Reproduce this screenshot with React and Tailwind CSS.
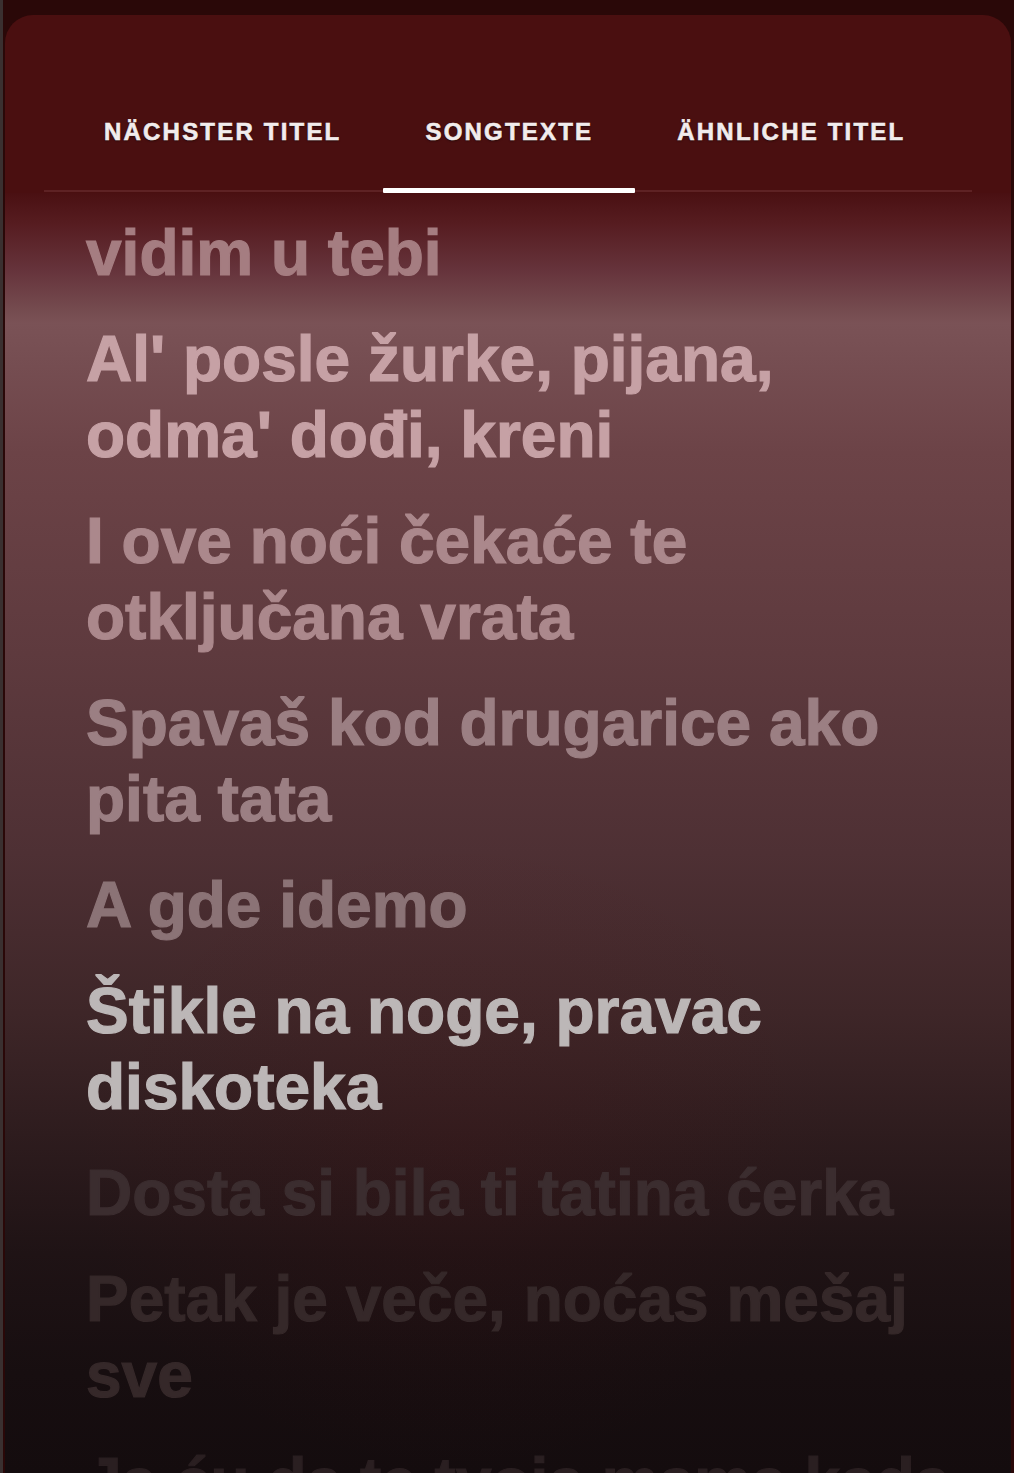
import { useState } from 'react';

const tabs = ['Nächster Titel', 'Songtexte', 'Ähnliche Titel'];

// each stanza is a list of already-wrapped lines, with its colour
const stanzas = [
    { lines: ['vidim u tebi'], color: 'text-[#a57d81]' },
    { lines: ["Al' posle žurke, pijana,", "odma' dođi, kreni"], color: 'text-[#c6a1a5]' },
    { lines: ['I ove noći čekaće te', 'otključana vrata'], color: 'text-[#ab888c]' },
    { lines: ['Spavaš kod drugarice ako', 'pita tata'], color: 'text-[#9b7f83]' },
    { lines: ['A gde idemo'], color: 'text-[#8b7376]' },
    { lines: ['Štikle na noge, pravac', 'diskoteka'], color: 'text-[#bcb7b7]' },
    { lines: ['Dosta si bila ti tatina ćerka'], color: 'text-[#3b2d2f]' },
    { lines: ['Petak je veče, noćas mešaj', 'sve'], color: 'text-[#352829]' },
    { lines: ['Ja ću da te tvoja mama kada'], color: 'text-[#2a1f21]' },
];

export default function App() {
    const [active, setActive] = useState(1);

    return (
        <div
            className="h-[1473px] overflow-hidden bg-[#2a0808] pt-[15px] pl-[2px] pr-[3px] border-l-[3px] border-[#3a3030]"
            style={{ fontFamily: '"Liberation Sans", Arial, sans-serif' }}
        >
            <div className="h-full rounded-t-[28px] overflow-hidden bg-[#4a0f10] flex flex-col">
                {/* tab header */}
                <div className="pt-[102px] px-[39px]">
                    <div className="relative flex pl-[18px]">
                        <div className="absolute left-0 right-0 bottom-[1px] h-[2px] bg-[#5e2224]" />
                        {tabs.map((t, i) => (
                            <button
                                key={t}
                                onClick={() => setActive(i)}
                                className="relative px-[42px] pb-[46px] text-[24px] leading-[30px] font-bold uppercase tracking-[2.2px] text-[#f2ecec] [-webkit-text-stroke:0.6px_currentColor] [text-shadow:0_1px_2px_rgba(0,0,0,0.6)]"
                            >
                                {t}
                                {active === i && (
                                    <span className="absolute left-0 right-0 bottom-0 h-[5px] bg-white rounded-[1px]" />
                                )}
                            </button>
                        ))}
                    </div>
                </div>

                {/* lyrics */}
                <div className="relative flex-1 bg-[linear-gradient(to_bottom,#4a1012_0px,#561c20_30px,#65323a_75px,#744a4e_115px,#7a5256_130px,#764e52_165px,#6c4347_260px,#5e3a3e_460px,#4e3034_660px,#3e2628_820px,#2e1c1e_940px,#1f1315_1060px,#170e10_1180px,#140c0e_1280px)]">
                    <div className="absolute inset-0 bg-[radial-gradient(ellipse_380px_320px_at_45%_72%,rgba(100,20,22,0.12),transparent)]" />
                    <div className="relative flex flex-col gap-[30px] pt-[22px] px-[81px]">
                        {stanzas.map((s, i) => (
                            <p
                                key={i}
                                className={`text-[64px] leading-[76px] font-bold whitespace-nowrap [-webkit-text-stroke:1.2px_currentColor] ${s.color}`}
                            >
                                {s.lines.map(l => (
                                    <span key={l} className="block">{l}</span>
                                ))}
                            </p>
                        ))}
                    </div>
                </div>
            </div>
        </div>
    );
}
